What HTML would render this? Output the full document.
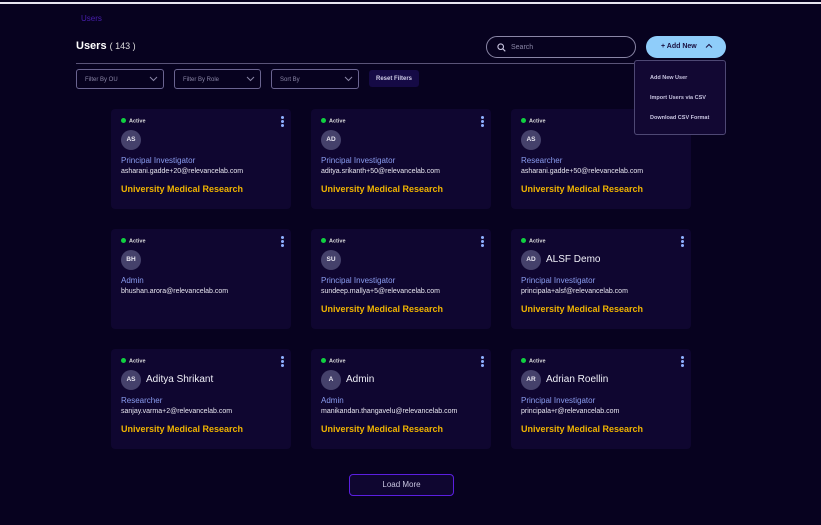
<!DOCTYPE html>
<html><head><style>
*{margin:0;padding:0;box-sizing:border-box}
body{width:821px;height:525px;background:#07021f;font-family:"Liberation Sans",sans-serif;position:relative;overflow:hidden;color:#fff}
.abs{position:absolute}
.topline{left:0;top:2px;width:821px;height:2px;background:#e8e6f0}
.crumb{left:81px;top:14px;font-size:8px;color:#4a1fb0}
.title{left:76px;top:40px;font-size:11px;font-weight:bold;color:#fff}
.title span{font-weight:normal;font-size:9px;color:#ddd}
.hr{left:76px;top:63px;width:650px;height:1px;background:#5a5478}
.sel{top:69px;height:20px;border:1px solid #6a6490;border-radius:3px;font-size:6px;color:#8a86a6;padding:7px 8px 0}
.sel svg{position:absolute;right:5px;top:6px}
.reset{left:369px;top:70px;width:50px;height:17px;background:#150a45;border-radius:3px;font-size:6px;font-weight:bold;color:#cfcbe6;text-align:center;line-height:18px}
.search{left:486px;top:36px;width:150px;height:22px;border:1px solid #8a86a6;border-radius:11px;font-size:7px;color:#8a86a6;padding:7px 0 0 24px}
.add{left:646px;top:36px;width:80px;height:22px;background:#8fcdfa;border-radius:11px;font-size:7px;font-weight:bold;color:#1a1040;padding:7px 0 0 15px}
.menu{left:634px;top:60px;width:92px;height:75px;background:#120833;border:1px solid #4e4874;border-radius:3px;font-size:5.5px;font-weight:bold;color:#c8c4e0;z-index:5}
.menu div{position:absolute;left:15px}
.card{width:180px;height:100px;background:#0f0630;border-radius:4px}
.st{position:absolute;left:10px;top:9px;font-size:5.5px;font-weight:bold;color:#ddd}
.st:before{content:"";display:inline-block;width:5px;height:5px;border-radius:50%;background:#10d040;margin-right:3px;vertical-align:-0.5px}
.dots{position:absolute;right:7px;top:7px;width:3px}
.dots i{display:block;width:3px;height:3px;border-radius:50%;background:#8fb0ff;margin-bottom:1px}
.av{position:absolute;left:10px;top:21px;width:20px;height:20px;border-radius:50%;background:#45416b;font-size:6.5px;font-weight:bold;color:#e8e6f0;text-align:center;line-height:20px}
.nm{position:absolute;left:35px;top:25px;font-size:10px;color:#f0f0f8}
.role{position:absolute;left:10px;top:47px;font-size:8px;color:#8a9cf0}
.em{position:absolute;left:10px;top:59px;font-size:7px;color:#e8e6f0}
.org{position:absolute;left:10px;top:75px;font-size:9px;font-weight:bold;color:#f0b400}
.load{left:349px;top:474px;width:105px;height:22px;border:1px solid #5b1fe0;border-radius:4px;background:#0f0630;font-size:8px;color:#c8c4e0;text-align:center;line-height:20px}
</style></head><body>
<div class="abs topline"></div>
<div class="abs crumb">Users</div>
<div class="abs title">Users <span>( 143 )</span></div>
<div class="abs hr"></div>
<div class="abs sel" style="left:76px;width:88px">Filter By OU<svg width="9" height="6"><path d="M1 1l3.5 3.5L8 1" stroke="#8a86a6" fill="none"/></svg></div>
<div class="abs sel" style="left:174px;width:87px">Filter By Role<svg width="9" height="6"><path d="M1 1l3.5 3.5L8 1" stroke="#8a86a6" fill="none"/></svg></div>
<div class="abs sel" style="left:271px;width:88px">Sort By<svg width="9" height="6"><path d="M1 1l3.5 3.5L8 1" stroke="#8a86a6" fill="none"/></svg></div>
<div class="abs reset">Reset Filters</div>
<div class="abs search"><svg class="abs" style="left:10px;top:6px" width="9" height="9"><circle cx="3.7" cy="3.7" r="2.8" stroke="#c8c4e0" fill="none" stroke-width="1.1"/><path d="M5.8 5.8L8.3 8.3" stroke="#c8c4e0" stroke-width="1.1"/></svg>Search</div>
<div class="abs add">+ Add New <svg style="margin-left:6px;vertical-align:0" width="8" height="5"><path d="M1 4.5L4 1.5l3 3" stroke="#1a1040" fill="none"/></svg></div>
<div class="abs menu"><div style="top:14px">Add New User</div><div style="top:34px">Import Users via CSV</div><div style="top:54px">Download CSV Format</div></div>

<div class="abs card" style="left:111px;top:109px"><div class="st">Active</div><div class="dots"><i></i><i></i><i></i></div><div class="av">AS</div><div class="role">Principal Investigator</div><div class="em">asharani.gadde+20@relevancelab.com</div><div class="org">University Medical Research</div></div>
<div class="abs card" style="left:311px;top:109px"><div class="st">Active</div><div class="dots"><i></i><i></i><i></i></div><div class="av">AD</div><div class="role">Principal Investigator</div><div class="em">aditya.srikanth+50@relevancelab.com</div><div class="org">University Medical Research</div></div>
<div class="abs card" style="left:511px;top:109px"><div class="st">Active</div><div class="dots"><i></i><i></i><i></i></div><div class="av">AS</div><div class="role">Researcher</div><div class="em">asharani.gadde+50@relevancelab.com</div><div class="org">University Medical Research</div></div>

<div class="abs card" style="left:111px;top:229px"><div class="st">Active</div><div class="dots"><i></i><i></i><i></i></div><div class="av">BH</div><div class="role">Admin</div><div class="em">bhushan.arora@relevancelab.com</div></div>
<div class="abs card" style="left:311px;top:229px"><div class="st">Active</div><div class="dots"><i></i><i></i><i></i></div><div class="av">SU</div><div class="role">Principal Investigator</div><div class="em">sundeep.mallya+5@relevancelab.com</div><div class="org">University Medical Research</div></div>
<div class="abs card" style="left:511px;top:229px"><div class="st">Active</div><div class="dots"><i></i><i></i><i></i></div><div class="av">AD</div><div class="nm">ALSF Demo</div><div class="role">Principal Investigator</div><div class="em">principala+alsf@relevancelab.com</div><div class="org">University Medical Research</div></div>

<div class="abs card" style="left:111px;top:349px"><div class="st">Active</div><div class="dots"><i></i><i></i><i></i></div><div class="av">AS</div><div class="nm">Aditya Shrikant</div><div class="role">Researcher</div><div class="em">sanjay.varma+2@relevancelab.com</div><div class="org">University Medical Research</div></div>
<div class="abs card" style="left:311px;top:349px"><div class="st">Active</div><div class="dots"><i></i><i></i><i></i></div><div class="av">A</div><div class="nm">Admin</div><div class="role">Admin</div><div class="em">manikandan.thangavelu@relevancelab.com</div><div class="org">University Medical Research</div></div>
<div class="abs card" style="left:511px;top:349px"><div class="st">Active</div><div class="dots"><i></i><i></i><i></i></div><div class="av">AR</div><div class="nm">Adrian Roellin</div><div class="role">Principal Investigator</div><div class="em">principala+r@relevancelab.com</div><div class="org">University Medical Research</div></div>

<div class="abs load">Load More</div>
</body></html>
